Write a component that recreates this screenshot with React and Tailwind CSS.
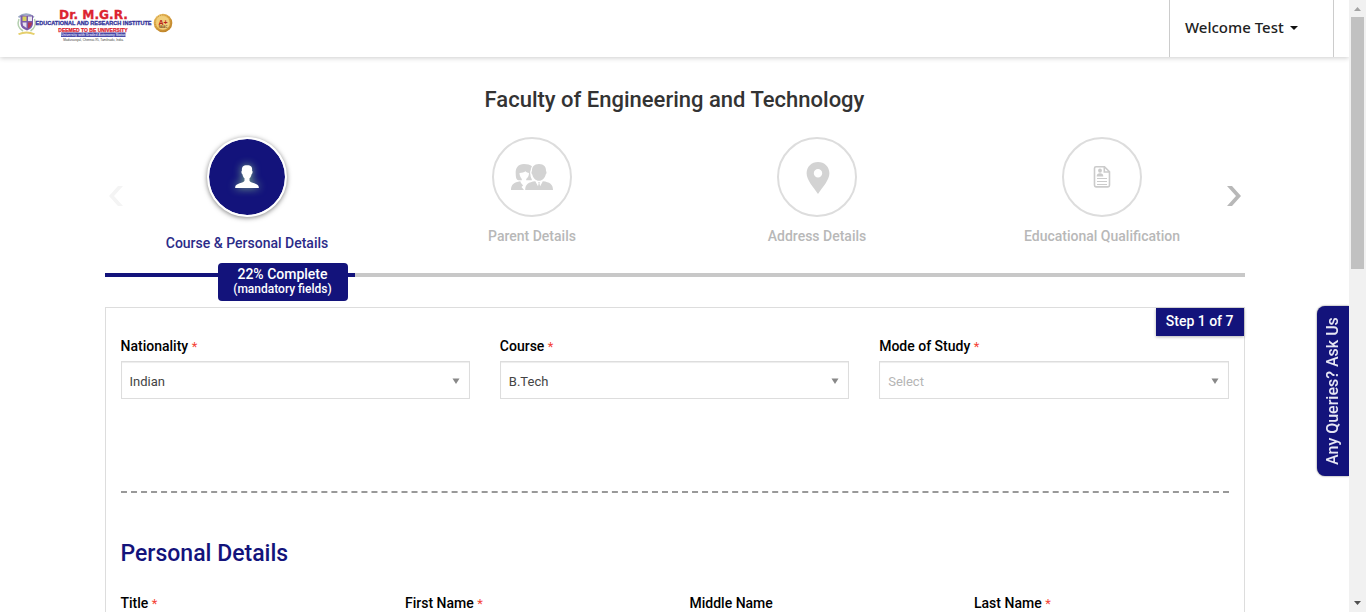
import React from "react";

function Logo() {
  return (
    <svg
      viewBox="0 0 168 44"
      className="h-11 w-[168px]"
      role="img"
      aria-label="Dr. M.G.R. Educational and Research Institute"
      fontFamily="'Liberation Sans', Arial, sans-serif"
      fontWeight="700"
      textAnchor="middle"
    >
      <defs>
        <radialGradient id="gold" cx="40%" cy="35%" r="65%">
          <stop offset="0" stopColor="#fbe7a3" />
          <stop offset="0.6" stopColor="#e3ae49" />
          <stop offset="1" stopColor="#c08428" />
        </radialGradient>
      </defs>
      <path d="M10 13.500Q18 7 26.500 13.500L25.500 15Q18 9.500 11 15Z" fill="#9aa8c4" />
      <path d="M12.500 12.500H25V21Q24.500 25.500 19 27.500Q13 25.500 12.500 21Z" fill="#7a5aa8" />
      <path d="M14.500 13.500H18.500V18H14.500Z" fill="#d8d25c" />
      <path d="M20 13.500H24V18H20Z" fill="#e9e6ee" />
      <path d="M14.500 19.500H18.500V25L15 22.500Z" fill="#e5dfef" />
      <path d="M20 19.500H24Q23.500 24 20 25.500Z" fill="#b03a55" />
      <path d="M11 16Q8 24 15 28M26.500 16Q29 24 22.500 28" fill="none" stroke="#b5d0b0" strokeWidth="1.500" />
      <path d="M10 30.500Q18.500 26.500 27 30.500L26 32Q18.500 29 11 32Z" fill="#e5cf6c" />
      <text x="85.500" y="15.600" fontSize="12.200" fontFamily="'DejaVu Sans', sans-serif" fill="#dc2430" stroke="#dc2430" strokeWidth="0.300">Dr. M.G.R.</text>
      <text x="85.500" y="22" fontSize="5.550" fill="#34349a" stroke="#34349a" strokeWidth="0.300">EDUCATIONAL AND RESEARCH INSTITUTE</text>
      <text x="85" y="28.600" fontSize="5" fill="#dc2430" stroke="#dc2430" strokeWidth="0.250">DEEMED TO BE UNIVERSITY</text>
      <rect x="53" y="29.500" width="64.500" height="4.500" fill="#4a4aa8" />
      <text x="85.500" y="33.200" fontSize="3.350" fill="#dedef2">University with Graded Autonomy Status</text>
      <text x="85.500" y="38.300" fontSize="3.100" fontWeight="400" fill="#444">Maduravoyal, Chennai-95, Tamilnadu, India.</text>
      <circle cx="155" cy="20" r="9.300" fill="url(#gold)" />
      <circle cx="155" cy="20" r="6.800" fill="#f1cf7c" />
      <circle cx="155" cy="20" r="8" fill="none" stroke="#c08a38" strokeWidth="1" strokeDasharray="1 1.300" />
      <text x="155" y="21.500" fontSize="7" fill="#b82318">A+</text>
      <text x="155" y="25" fontSize="3" fill="#7a5220">NAAC</text>
    </svg>
  );
}

function PersonIcon() {
  return (
    <svg viewBox="0 0 24 24" className="size-6 fill-white drop-shadow-[0_0_4px_#7fb48a]" aria-hidden="true">
      <path d="M12 .3C8 .3 6.700 2 6.900 5.700C6.100 6 6.300 8.500 7.400 9.200C7.800 11.200 8.600 12.500 9.500 13.300V15.700C9 18 .3 18.200.2 22V23H23.800V22C23.700 18.200 15 18 14.500 15.700V13.300C15.400 12.500 16.200 11.200 16.600 9.200C17.700 8.500 17.900 6 17.100 5.700C17.500 2 16 .3 12 .3Z" />
    </svg>
  );
}

function ParentsIcon() {
  return (
    <svg viewBox="0 0 42 26" className="h-[26px] w-[42px] fill-[#d3d3d3]" aria-hidden="true">
      <path d="M13 0C7 0 4.500 4 4.700 9C4.800 13 5 15.800 7.500 16.300H10.800V15C9.200 13 8.500 11 8.500 9C11 9 13 8.500 14.500 7.300C15.500 8.400 16.800 8.900 18 9C18 11.500 17 13.700 15.200 15V16.300H20.800V15.200C19.900 13.500 19.500 12.300 19.500 11C19 9.500 19 7 19.800 6C19.800 4.500 20.400 3.200 21 2.300C19 .8 16.500 0 13 0Z" />
      <path d="M0 26C0 20.500 3 18.200 9.300 17.300C9.800 19 10.800 20.500 12.200 21.200L10.500 23L13 26Z" />
      <path d="M28 0C23 0 20.800 3 21 7C20.200 7.500 20.300 9.800 21.300 10.500C22 14 24.800 16.800 28 16.800C31.200 16.800 34 14 34.700 10.500C35.700 9.800 35.800 7.500 35 7C35.200 3 33 0 28 0Z" />
      <path d="M14.200 26C14.200 20.500 17.500 18 24.300 17.300L27 22.300L27.700 19.300L26.900 18.200H29.200L28.400 19.300L29.200 22.300L31.800 17.300C38.700 18 42 20.500 42 26Z" />
    </svg>
  );
}

function PinIcon() {
  return (
    <svg viewBox="0 0 24 33" className="ml-0.5 mt-0.5 h-[33px] w-6 fill-[#d3d3d3]" aria-hidden="true">
      <path fillRule="evenodd" d="M12 0C5.600 0 .6 4.800.6 11.200C.6 18 7 24.500 12 32C17 24.500 23.400 18 23.400 11.200C23.400 4.800 18.400 0 12 0ZM12 7A4.200 4.200 0 1 1 12 15.400A4.200 4.200 0 1 1 12 7Z" />
    </svg>
  );
}

function DocumentIcon() {
  return (
    <svg viewBox="0 0 18 22" className="h-[22px] w-[18px]" fill="none" stroke="#cbcbcb" aria-hidden="true">
      <path d="M3 .8H11.500L16.500 5.800V19.300Q16.500 20.900 15 20.900H3Q1.500 20.900 1.500 19.300V2.300Q1.500 .8 3 .8ZM11.300 1V6H16.300" strokeWidth="1.600" />
      <ellipse cx="7" cy="4.600" rx="1.900" ry="2.200" fill="#cbcbcb" stroke="none" />
      <path d="M3.700 10.500Q3.700 7.300 7 7.300Q10.300 7.300 10.300 10.500Z" fill="#cbcbcb" stroke="none" />
      <path d="M4 12.500H14M4 15.500H14M4 18.500H14" strokeWidth="1" />
    </svg>
  );
}

const steps = [
  { label: "Course & Personal Details", Icon: PersonIcon, active: true },
  { label: "Parent Details", Icon: ParentsIcon },
  { label: "Address Details", Icon: PinIcon },
  { label: "Educational Qualification", Icon: DocumentIcon },
];

function Step({ label, Icon, active }) {
  return (
    <li>
      <a
        href="#step"
        className={
          active
            ? "flex flex-col items-center gap-4 text-sm font-medium text-[#2b2b88]"
            : "flex flex-col items-center gap-[9px] text-sm font-medium text-[#b8b8b8]"
        }
        aria-current={active ? "step" : undefined}
      >
        <span
          className={
            active
              ? "flex size-20 items-center justify-center rounded-full border-2 border-white bg-[#13137b] bg-clip-padding shadow-[0_1px_5px_rgba(0,0,0,0.5)]"
              : "flex size-20 items-center justify-center rounded-full border-2 border-[#dddddd]"
          }
        >
          <Icon />
        </span>
        {label}
      </a>
    </li>
  );
}

function Star() {
  return <span className="text-[13px] font-normal text-[#f44336]">*</span>;
}

function SelectField({ id, label, value, placeholder }) {
  return (
    <div>
      <label htmlFor={id} className="block text-sm font-medium text-black">
        {label} <Star />
      </label>
      <div className="relative mt-1">
        <select
          id={id}
          defaultValue={value}
          className={
            placeholder
              ? "block h-[38px] w-full appearance-none border border-[#dddddd] bg-white px-2 pt-1 text-[13px] text-[#b5b5b5] shadow-[inset_0_1px_1px_rgba(0,0,0,0.075)]"
              : "block h-[38px] w-full appearance-none border border-[#dddddd] bg-white px-2 pt-1 text-[13px] text-[#444444] shadow-[inset_0_1px_1px_rgba(0,0,0,0.075)]"
          }
        >
          <option>{value}</option>
        </select>
        <svg viewBox="0 0 8 6" className="pointer-events-none absolute right-2.5 top-[17px] h-1.5 w-2 fill-[#888888]" aria-hidden="true">
          <path d="M.5.5H7.500L4 6Z" />
        </svg>
      </div>
    </div>
  );
}

function TextField({ id, label, required }) {
  return (
    <div>
      <label htmlFor={id} className="block text-sm font-medium text-black">
        {label} {required && <Star />}
      </label>
      <input id={id} type="text" className="mt-1 h-[38px] w-full border border-[#dddddd] px-2 text-[13px]" />
    </div>
  );
}

export default function App() {
  return (
    <div className="flex h-screen overflow-hidden bg-white font-[Roboto,sans-serif]">
      <div className="relative min-w-0 flex-1 overflow-hidden">
        <header className="flex h-[57px] justify-between pl-2 pr-[15px] shadow-[0_1px_5px_rgba(0,0,0,0.2)]">
          <a href="#home" className="pt-[3px]">
            <Logo />
          </a>
          <button
            type="button"
            className="flex w-[165px] items-center gap-1.5 border-x border-[#cccccc] pb-0.5 pl-[15px] font-['Noto_Sans',sans-serif] text-[15px] font-medium text-[#222222]"
          >
            Welcome Test
            <svg viewBox="0 0 8 4" className="h-1 w-2 fill-[#111111]" aria-hidden="true">
              <path d="M0 0H8L4 4Z" />
            </svg>
          </button>
        </header>

        <main className="mx-auto max-w-[1140px]">
          <h1 className="pt-[29px] text-center text-[22px] font-medium leading-7 text-[#333333]">
            Faculty of Engineering and Technology
          </h1>

          <nav className="relative mt-[23px] h-[136px]" aria-label="Application steps">
            <ol className="grid grid-cols-4">
              {steps.map((s) => (
                <Step key={s.label} {...s} />
              ))}
            </ol>
            <button type="button" aria-label="Previous steps" className="absolute left-1 top-[49px]">
              <svg viewBox="0 0 14 20" className="h-5 w-3.5 fill-[#f4f4f4]">
                <path d="M9 0H14L5 10L14 20H9L0 10Z" />
              </svg>
            </button>
            <button type="button" aria-label="Next steps" className="absolute right-1 top-[49px]">
              <svg viewBox="0 0 14 20" className="h-5 w-3.5 fill-[#b8b8b8]">
                <path d="M5 0H0L9 10L0 20H5L14 10Z" />
              </svg>
            </button>
          </nav>

          <div className="relative h-1 bg-[#c8c8c8]">
            <div className="h-full w-[22%] bg-[#13137b]" />
            <div className="absolute -top-2.5 left-[113px] w-[130px] rounded bg-[#13137b] pb-[5px] pt-[3px] text-center font-medium text-white">
              <div className="text-sm leading-4">22% Complete</div>
              <div className="text-xs leading-[14px]">(mandatory fields)</div>
            </div>
          </div>

          <form className="relative mt-[30px] border border-[#dddddd] px-[15px] pb-10 pt-7">
            <div className="absolute right-0 top-0 bg-[#13137b] px-2.5 pb-[5px] pt-[3px] text-sm font-medium text-white shadow-[0_1px_3px_rgba(0,0,0,0.3)]">
              Step 1 of 7
            </div>
            <div className="grid grid-cols-3 gap-[30px]">
              <SelectField id="nationality" label="Nationality" value="Indian" />
              <SelectField id="course" label="Course" value="B.Tech" />
              <SelectField id="mode" label="Mode of Study" value="Select" placeholder />
            </div>
            <hr className="mt-[92px] border-t-2 border-dashed border-[#999999]" />
            <h2 className="mt-[47px] text-[23px] font-medium leading-7 text-[#13137b]">Personal Details</h2>
            <div className="mt-[25px] grid grid-cols-4 gap-[30px]">
              <TextField id="title" label="Title" required />
              <TextField id="first" label="First Name" required />
              <TextField id="middle" label="Middle Name" />
              <TextField id="last" label="Last Name" required />
            </div>
          </form>
        </main>

        <button
          type="button"
          className="absolute right-0 top-1/2 h-[170px] w-8 rotate-180 rounded-r-lg bg-[#13137b] text-center text-base font-medium text-[#e6e6f4] shadow-[0_0_2px_rgba(0,0,0,0.6)] [writing-mode:vertical-rl]"
        >
          Any Queries? Ask Us
        </button>
      </div>

      <div className="flex w-[17px] flex-col items-center justify-between bg-[#f1f1f1]" aria-hidden="true">
        <svg viewBox="0 0 17 17" className="size-[17px] fill-[#a3a3a3]">
          <path d="M5 11H12L8.500 7Z" />
        </svg>
        <div className="flex w-[13px] flex-1 flex-col">
          <div className="h-[252px] bg-[#c1c1c1]" />
        </div>
        <svg viewBox="0 0 17 17" className="size-[17px] fill-[#505050]">
          <path d="M5 6H12L8.500 10Z" />
        </svg>
      </div>
    </div>
  );
}
